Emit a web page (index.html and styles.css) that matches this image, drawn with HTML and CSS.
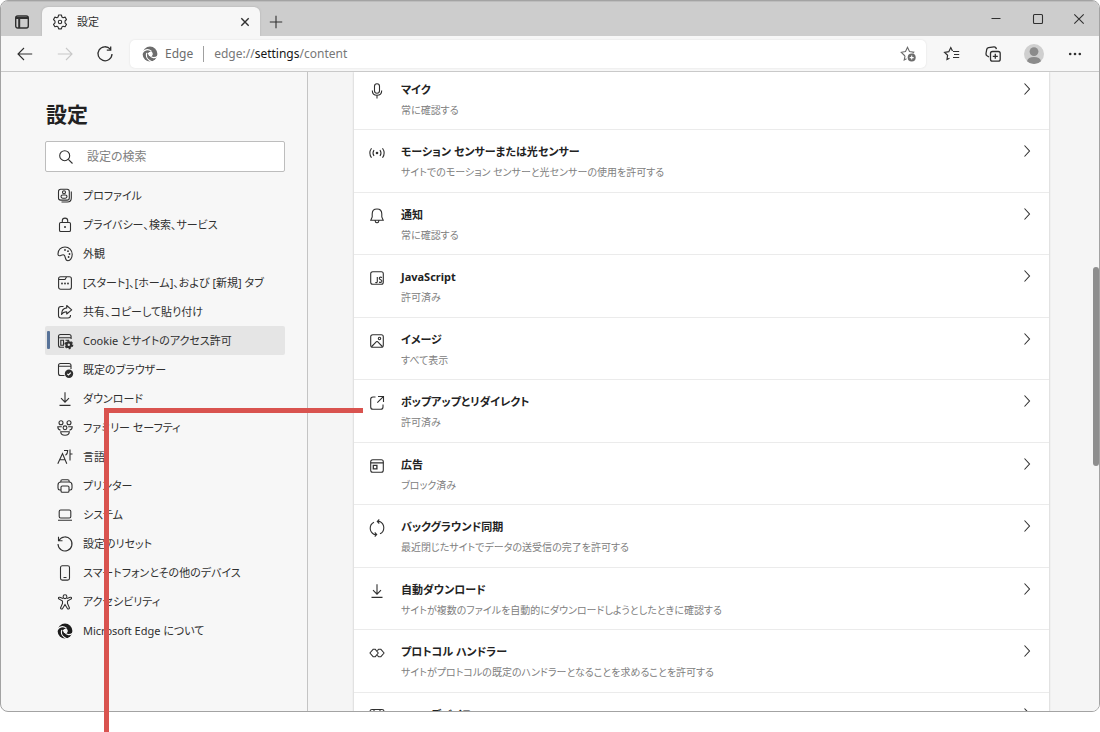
FILE: index.html
```html
<!DOCTYPE html>
<html lang="ja">
<head>
<meta charset="utf-8">
<title>設定</title>
<link rel="stylesheet" href="styles.css">
</head>
<body>
<svg class="defs" aria-hidden="true">
  <symbol id="edge" viewBox="0 0 16 16">
    <circle cx="8" cy="8" r="7.400" fill="currentColor"/>
    <g class="swirl">
      <path d="M.2 7.200C1.800 3.500 6.200 2.600 9.200 5.200"/>
      <path d="M4.800 7.300C3.600 10.500 5.500 14 9.800 15.800"/>
      <path d="M7.800 9.300C9.500 12.200 12.800 12.400 16 10"/>
      <path d="M6.500 7.500Q7.500 5.800 9.500 6.500 11 8.300 9.200 9.700 7.200 10 6.500 7.500Z" fill="var(--page)"/>
    </g>
  </symbol>
  <symbol id="download" viewBox="0 0 16 16"><path d="M8 1.200V11M4 7.200 8 11.200l4-4M2.500 14.400h11"/></symbol>
  <symbol id="chev" viewBox="0 0 16 16"><path d="M5.500 2.500 10.500 8l-5 5.500"/></symbol>
</svg>
<div class="window">
  <header class="titlebar">
    <button class="tabmenu" aria-label="タブ操作メニュー"><svg viewBox="0 0 16 16"><rect x="1.700" y="2" width="12.600" height="12" rx="2" stroke-width="1.400"/><path d="M2 4h12M5.200 4v10" stroke-width="2"/></svg></button>
    <div class="tab">
      <svg viewBox="0 0 16 16"><path d="M6.600 1h2.800l.5 2 1.200.7 2-.6 1.400 2.400-1.500 1.500v1.900l1.500 1.500-1.400 2.400-2-.6-1.200.7-.5 2H6.600l-.5-2-1.200-.7-2 .6-1.400-2.400L3 8.900V7.100L1.500 5.500 2.900 3.100l2 .6L6.100 3Z" stroke-linejoin="round"/><circle cx="8" cy="8" r="1.700"/></svg>
      <span class="tabname">設定</span>
      <button class="close" aria-label="タブを閉じる"><svg viewBox="0 0 16 16"><path d="m4.300 4.300 7.400 7.400m0-7.400-7.400 7.400" stroke-width="1.400"/></svg></button>
    </div>
    <button class="newtab" aria-label="新しいタブ"><svg viewBox="0 0 16 16"><path d="M8 1.800v12.400M1.800 8h12.400"/></svg></button>
    <div class="caption">
      <button aria-label="最小化"><svg viewBox="0 0 16 16"><path d="M3.500 7.500h9"/></svg></button>
      <button aria-label="最大化"><svg viewBox="0 0 16 16"><rect x="3.500" y="3.500" width="9" height="9" rx="1"/></svg></button>
      <button aria-label="閉じる"><svg viewBox="0 0 16 16"><path d="m3.300 3.300 9.400 9.400m0-9.400-9.400 9.400"/></svg></button>
    </div>
  </header>
  <div class="toolbar">
    <div class="history">
      <button aria-label="戻る"><svg viewBox="0 0 16 16"><path d="M15.200 8H1.200M7 2 1 8l6 6"/></svg></button>
      <button class="off" aria-label="進む" disabled><svg viewBox="0 0 16 16"><path d="M.8 8h14M9 2l6 6-6 6"/></svg></button>
      <button aria-label="更新"><svg viewBox="0 0 16 16"><path d="M13.300 3.200A7 7 0 1 0 15 8M13.700.4v3.800H9.800" stroke-width="1.300"/></svg></button>
    </div>
    <div class="address">
      <svg class="logo"><use href="#edge"/></svg>
      <span class="site">Edge</span>
      <span class="url">edge://<b>settings</b>/content</span>
      <button aria-label="お気に入りに追加"><svg viewBox="0 0 16 16"><path d="m5 10-.8 4 2.300-1.200M5 10 1.300 6.300l4.200-.7L7.500 1.300l2 4.300 4.200.5-1 1.200"/><circle cx="11.700" cy="11.600" r="4" fill="currentColor" stroke="none"/><path d="M11.700 9.600v4M9.700 11.600h4" stroke="#fff"/></svg></button>
    </div>
    <div class="tools">
      <button aria-label="お気に入り"><svg viewBox="0 0 16 16"><path d="M9 5.500h6.200M10 8.500h5.200M9 11.500h6.200M5.500 12.200 3 13.500l.6-4.200-3-3 4.200-.6 2-4.100 1.700 3.300" stroke-width="1.200"/></svg></button>
      <button aria-label="コレクション"><svg viewBox="0 0 16 16"><rect x="5.500" y="5.500" width="9.700" height="9.700" rx="2" stroke-width="1.300"/><path d="M10.300 7.800v5M7.800 10.300h5M4 11 2 9.800Q.8 9 1 7.500l.7-4Q2 2 3.500 1.700L9 .9q2-.1 2.400 2.300" stroke-width="1.300"/></svg></button>
      <button class="avatar" aria-label="プロファイル"><svg viewBox="0 0 20 20"><circle cx="10" cy="10" r="10" fill="#cfcfcf" stroke="none"/><circle cx="10" cy="7.600" r="4.400" fill="#8b8b8b" stroke="none"/><path d="M3 17.200Q4 13 10 13t7 4.200A10 10 0 0 1 3 17.200Z" fill="#8b8b8b" stroke="none"/></svg></button>
      <button aria-label="設定など"><svg viewBox="0 0 16 16"><g fill="currentColor" stroke="none"><circle cx="3.200" cy="8" r="1.300"/><circle cx="8" cy="8" r="1.300"/><circle cx="12.800" cy="8" r="1.300"/></g></svg></button>
    </div>
  </div>
  <div class="page">
    <aside class="sidebar">
      <h1>設定</h1>
      <label class="search">
        <svg viewBox="0 0 16 16"><circle cx="6.700" cy="6.700" r="5"/><path d="m10.300 10.300 4.200 4.200"/></svg>
        <input type="search" placeholder="設定の検索" aria-label="設定の検索">
      </label>
      <nav>
        <a href="#"><svg viewBox="0 0 16 16"><rect x="1.500" y="1.300" width="10.800" height="10.800" rx="2.200"/><circle cx="7" cy="4.300" r="1.500"/><rect x="4" y="7" width="6" height="3.200" rx="1.600"/><path d="M14.300 3.500v6.500q0 4-4 4H4.500"/></svg>プロファイル</a>
        <a href="#"><svg viewBox="0 0 16 16"><rect x="2.500" y="5.500" width="11" height="9" rx="1.300"/><path d="M5.300 5.500V3.800a2.700 2.700 0 0 1 5.400 0v1.700"/><circle cx="8" cy="10" r="1" fill="currentColor" stroke="none"/></svg>プライバシー、検索、サービス</a>
        <a href="#"><svg viewBox="0 0 16 16"><path d="M1 8.300C.8 3.500 4.200 1 8 1c4 0 7.200 3 7.200 7.200 0 3.700-2 6.500-4.200 6.500-3.500 0-2-4.500-4-5.700C5.500 8 4 9.800 2.500 9.800 1.500 9.800 1 9.200 1 8.300Z"/><g fill="currentColor" stroke="none"><circle cx="8" cy="4" r=".9"/><circle cx="11" cy="5.200" r=".9"/><circle cx="12.500" cy="8" r=".9"/><circle cx="11.600" cy="11" r=".9"/></g></svg>外観</a>
        <a href="#"><svg viewBox="0 0 16 16"><rect x="1.600" y="1.800" width="12.800" height="12.400" rx="2"/><path d="M2 4.500h6L9.500 2"/><g fill="currentColor" stroke="none"><circle cx="5" cy="8.500" r=".9"/><circle cx="8" cy="8.500" r=".9"/><circle cx="11" cy="8.500" r=".9"/></g></svg>[スタート]、[ホーム]、および [新規] タブ</a>
        <a href="#"><svg viewBox="0 0 16 16"><path d="M6.500 2.500H4Q1.500 2.500 1.500 5v6.500q0 2.500 2.500 2.500h7q2.500 0 2.500-2.500V11M9.700 1.500l5 4.300-5 4.200V7.700Q6 7.700 4.500 10.500 4.700 4.400 9.700 3.900Z" stroke-linejoin="round"/></svg>共有、コピーして貼り付け</a>
        <a href="#" class="on" aria-current="page"><svg viewBox="0 0 16 16"><path d="M7 14.300H3.500q-2 0-2-2V3.500q0-2 2-2h8.600q2 0 2 2V6M1.500 4.700h12.600M3.800 7.200h2.700v5H3.800zM8.500 7.300H12"/><circle cx="11.800" cy="11.700" r="2.300" stroke-width="2.200"/><circle cx="11.800" cy="11.700" r="3.800" stroke-width="1.400" stroke-dasharray="2 1.980"/></svg>Cookie とサイトのアクセス許可</a>
        <a href="#"><svg viewBox="0 0 16 16"><path d="M7.500 13.500H3.500q-2 0-2-2v-8q0-2 2-2h8.500q2 0 2 2V7M1.500 4.200H14"/><circle cx="12" cy="11.700" r="4.200" fill="currentColor" stroke="none"/><path d="m10.300 11.800 1.200 1.200 2.300-2.400" stroke="#fff"/></svg>既定のブラウザー</a>
        <a href="#"><svg><use href="#download"/></svg>ダウンロード</a>
        <a href="#"><svg viewBox="0 0 16 16"><circle cx="4" cy="2.700" r="2"/><circle cx="12" cy="2.700" r="2"/><circle cx="8" cy="7.800" r="1.900"/><path d="M3.700 11.700h8.600q0 3.500-4.300 3.500t-4.300-3.500ZM4.800 6.700H.8q0 3 2.700 3.400M11.200 6.700h4q0 3-2.700 3.400"/></svg>ファミリー セーフティ</a>
        <a href="#"><svg viewBox="0 0 16 16"><path d="M.8 14.800 5.500 4.500l4.300 10.300M2.800 10.800h5.400M7 1.500h3.700Q10.700 4.700 8.500 6.300M13 .5v11M13 5h2.500"/></svg>言語</a>
        <a href="#"><svg viewBox="0 0 16 16"><path d="M4 12H2.800Q1 12 1 10V7q0-3 3-3h8q3 0 3 3v3q0 2-1.800 2H12M3.800 4V3.200Q3.800 1.800 5.300 1.800h5.400q1.500 0 1.500 1.400V4"/><rect x="4" y="8" width="8" height="6.300" rx="1.300"/></svg>プリンター</a>
        <a href="#"><svg viewBox="0 0 16 16"><rect x="2.200" y="3" width="11.600" height="8" rx="1.500"/><path d="M1 13.300h14"/></svg>システム</a>
        <a href="#"><svg viewBox="0 0 16 16"><path d="M2 4.300A7 7 0 1 1 1 8M1.500.8v3.900h4"/></svg>設定のリセット</a>
        <a href="#"><svg viewBox="0 0 16 16"><rect x="3.500" y=".8" width="9" height="14.300" rx="1.800"/><path d="M6.500 12.500h3"/></svg>スマートフォンとその他のデバイス</a>
        <a href="#"><svg viewBox="0 0 16 16"><circle cx="8" cy="2.700" r="1.900"/><path d="M6 4.500 2.800 3.200q-1.600-.2-1.300 1.500L5.500 7v2.500L3.500 14q.5 1.600 2 .7L8 10.500l2.500 4.200q1.500.9 2-.7l-2-4.500V7l4-2.300q.3-1.700-1.300-1.500L10 4.500"/></svg>アクセシビリティ</a>
        <a href="#"><svg class="logo dark"><use href="#edge"/></svg>Microsoft Edge について</a>
      </nav>
    </aside>
    <main>
      <ul class="list">
        <li><button><svg viewBox="0 0 16 16"><rect x="5.500" y=".8" width="5" height="9.400" rx="2.500"/><path d="M3.300 7.500q0 4.800 4.700 4.800t4.700-4.800M8 12.300v3.200"/></svg><span class="text"><strong>マイク</strong><small>常に確認する</small></span><svg class="chev"><use href="#chev"/></svg></button></li>
        <li><button><svg viewBox="0 0 16 16"><circle cx="8" cy="8" r="1.300" fill="currentColor" stroke="none"/><path d="M5 5q-2 3 0 6M11 5q2 3 0 6M2.500 3.200q-3.300 4.800 0 9.600M13.500 3.200q3.300 4.800 0 9.600"/></svg><span class="text"><strong>モーション センサーまたは光センサー</strong><small>サイトでのモーション センサーと光センサーの使用を許可する</small></span><svg class="chev"><use href="#chev"/></svg></button></li>
        <li><button><svg viewBox="0 0 16 16"><path d="M8 1Q3.200 1 3.200 6v3L1.800 12.300h12.400L12.800 9V6Q12.800 1 8 1ZM6 12.500q.3 2.300 2 2.300t2-2.300"/></svg><span class="text"><strong>通知</strong><small>常に確認する</small></span><svg class="chev"><use href="#chev"/></svg></button></li>
        <li><button><svg viewBox="0 0 16 16"><rect x="1.700" y="1.700" width="12.600" height="12.600" rx="2"/><path d="M8.300 7v4.500q0 1.500-2 1M13 7.500q-2.700-1-2.700.8 0 1 1.300 1.400t1.300 1.400q0 1.800-2.900 1"/></svg><span class="text"><strong>JavaScript</strong><small>許可済み</small></span><svg class="chev"><use href="#chev"/></svg></button></li>
        <li><button><svg viewBox="0 0 16 16"><rect x="1.700" y="1.700" width="12.600" height="12.600" rx="2"/><circle cx="10.500" cy="5.500" r="1.200"/><path d="m2.700 13.500 4.500-4.700q.8-.6 1.600 0l4.500 4.700"/></svg><span class="text"><strong>イメージ</strong><small>すべて表示</small></span><svg class="chev"><use href="#chev"/></svg></button></li>
        <li><button><svg viewBox="0 0 16 16"><path d="M6.500 2H4Q1.700 2 1.700 4.300V12q0 2.300 2.300 2.300h7.700Q14 14.300 14 12V9.500M9 1.500h5.500V7M14.300 1.700 8.300 7.700"/></svg><span class="text"><strong>ポップアップとリダイレクト</strong><small>許可済み</small></span><svg class="chev"><use href="#chev"/></svg></button></li>
        <li><button><svg viewBox="0 0 16 16"><rect x="1.700" y="1.700" width="12.600" height="12.600" rx="2"/><path d="M1.700 4.800h12.600M4.300 7.300h3.600v3.600H4.300z" stroke-width="1.300"/></svg><span class="text"><strong>広告</strong><small>ブロック済み</small></span><svg class="chev"><use href="#chev"/></svg></button></li>
        <li><button><svg viewBox="0 0 16 16"><path d="M5 2.200Q1.200 4 1.200 8.300q0 4 4 6.200h2.300M5.700 12.500l2 2-2 2M11 13.800Q14.800 12 14.800 7.700q0-4-4-6.200H8.500M10.300-.5l-2 2 2 2"/></svg><span class="text"><strong>バックグラウンド同期</strong><small>最近閉じたサイトでデータの送受信の完了を許可する</small></span><svg class="chev"><use href="#chev"/></svg></button></li>
        <li><button><svg><use href="#download"/></svg><span class="text"><strong>自動ダウンロード</strong><small>サイトが複数のファイルを自動的にダウンロードしようとしたときに確認する</small></span><svg class="chev"><use href="#chev"/></svg></button></li>
        <li><button><svg viewBox="0 0 16 16"><path d="M4.300 4.200h1.800L9.300 8l-3.200 3.800H4.300L.9 8ZM8.300 5.700l1.500-1.500h1.900L15.100 8l-3.400 3.800H9.800l-1.500-1.500" stroke-linejoin="round"/></svg><span class="text"><strong>プロトコル ハンドラー</strong><small>サイトがプロトコルの既定のハンドラーとなることを求めることを許可する</small></span><svg class="chev"><use href="#chev"/></svg></button></li>
        <li><button><svg viewBox="0 0 16 16"><rect x="1" y="1.500" width="14" height="13" rx="2"/><path d="M5 2v6M11 2v6"/></svg><span class="text"><strong>MIDI デバイス</strong></span><svg class="chev"><use href="#chev"/></svg></button></li>
      </ul>
      <div class="thumb"></div>
    </main>
  </div>
</div>
<div class="callout"></div>
</body>
</html>
```

FILE: styles.css
```css
* { box-sizing: border-box; }
body {
  --page: #f7f7f7;
  margin: 0;
  height: 100vh;
  padding-bottom: 20px;
  position: relative;
  overflow: hidden;
  background: #fff;
  color: #303030;
  font: 12px/20px "Noto Sans", "Noto Sans CJK JP", sans-serif;
  font-feature-settings: "palt";
}
.defs { display: none; }
svg { width: 16px; height: 16px; flex: none; fill: none; stroke: currentColor; stroke-width: 1.1; overflow: visible; }
.logo { stroke: none; }
.dark { color: #1c1c1c; }
.swirl { stroke: var(--page); stroke-width: 1.2; stroke-linecap: round; }
button { border: 0; padding: 0; background: none; color: inherit; font: inherit; font-feature-settings: inherit; display: flex; align-items: center; justify-content: center; }
a { color: inherit; text-decoration: none; }

.window {
  height: 100%;
  display: flex;
  flex-direction: column;
  overflow: hidden;
  border: 1px solid #a3a3a3;
  border-radius: 8px;
  background: var(--page);
}

.titlebar { display: flex; align-items: stretch; height: 35px; background: #cdcdcd; border-top: 1px solid #bdbdbd; }
.tabmenu { width: 41px; padding-top: 6px; }
.tab { display: flex; align-items: center; width: 218px; margin-top: 5px; padding: 0 7px 0 10px; border-radius: 6px 6px 0 0; background: var(--page); box-shadow: 0 0 2px #aaa; }
.tabname { flex: 1; margin-left: 9px; font-size: 11px; }
.newtab { width: 31px; padding-top: 6px; }
.caption { display: flex; margin-left: auto; }
.caption button { width: 42px; }
.caption button:last-child { width: 40px; }

.toolbar { display: flex; align-items: center; height: 36px; background: var(--page); border-bottom: 1px solid #c9c9c9; }
.history { display: flex; width: 129px; padding-left: 4px; }
.history button { width: 40px; }
.off { color: #c8c8c8; }
.address { --page: #fff; flex: 1; display: flex; align-items: center; height: 28px; padding: 0 10px 0 12px; border-radius: 5px; background: #fff; color: #6c6c6c; box-shadow: 0 0 2px #ddd; }
.site { margin-left: 7px; padding-right: 10px; border-right: 1px solid #a0a0a0; line-height: 16px; }
.url { flex: 1; margin-left: 10px; color: #777; }
.url b { font-weight: 400; color: #161616; }
.tools { display: flex; padding: 0 4px 0 5px; }
.tools button { width: 41px; }
.avatar svg { width: 20px; height: 20px; }

.page { flex: 1; min-height: 0; display: flex; }
.sidebar { flex: none; width: 307px; padding: 26px 22px 0 44px; border-right: 1px solid #c4c4c4; }
h1 { margin: 0 0 11px; padding-left: 1px; font-size: 21px; line-height: 32px; font-weight: 700; color: #222; }
.search { display: flex; align-items: center; gap: 13px; height: 31px; margin-bottom: 9px; padding-left: 12px; border: 1px solid #bdbdbd; border-radius: 2px; background: #fff; }
.search input { flex: 1; min-width: 0; padding: 0; border: 0; outline: 0; background: none; font: inherit; font-feature-settings: inherit; }
.search input::placeholder { color: #808080; }
nav a { position: relative; display: flex; align-items: center; gap: 10px; height: 29px; padding-left: 12px; font-size: 11px; white-space: nowrap; border-radius: 2px; }
nav .on { background: #e5e5e5; }
nav .on::before { content: ""; position: absolute; left: 2px; top: 5px; width: 3px; height: 18px; border-radius: 1px; background: #587399; }

main { flex: 1; position: relative; min-width: 0; overflow: hidden; padding: 0 50px 0 46px; background: #f5f5f5; }
.list { margin: 0; padding: 0; list-style: none; background: #fff; box-shadow: 0 0 2px #bbb; }
.list li { height: 62px; border-bottom: 1px solid #ebebeb; }
.list li:nth-child(even) { height: 63px; }
.list li:first-child { height: 58px; }
.list li:first-child button { padding-top: 8px; }
.list button { width: 100%; align-items: flex-start; padding: 12px 14px 0 15px; text-align: left; }
.list button svg { margin-top: 3px; }
.list button .chev { margin-top: 1px; }
.text { flex: 1; display: flex; flex-direction: column; margin-left: 16px; }
.text strong { font-size: 11px; font-weight: 700; color: #222; }
.text small { font-size: 10px; color: #808080; }
.thumb { position: absolute; right: 0; top: 195px; width: 6px; height: 199px; border-radius: 3px; background: #8e8e8e; }

.callout { position: absolute; left: 104px; top: 408px; bottom: 0; width: 259px; border-top: 5px solid #d9534f; pointer-events: none; }
.callout::before { content: ""; display: block; width: 5px; height: 100%; background: #d9534f; }
```
